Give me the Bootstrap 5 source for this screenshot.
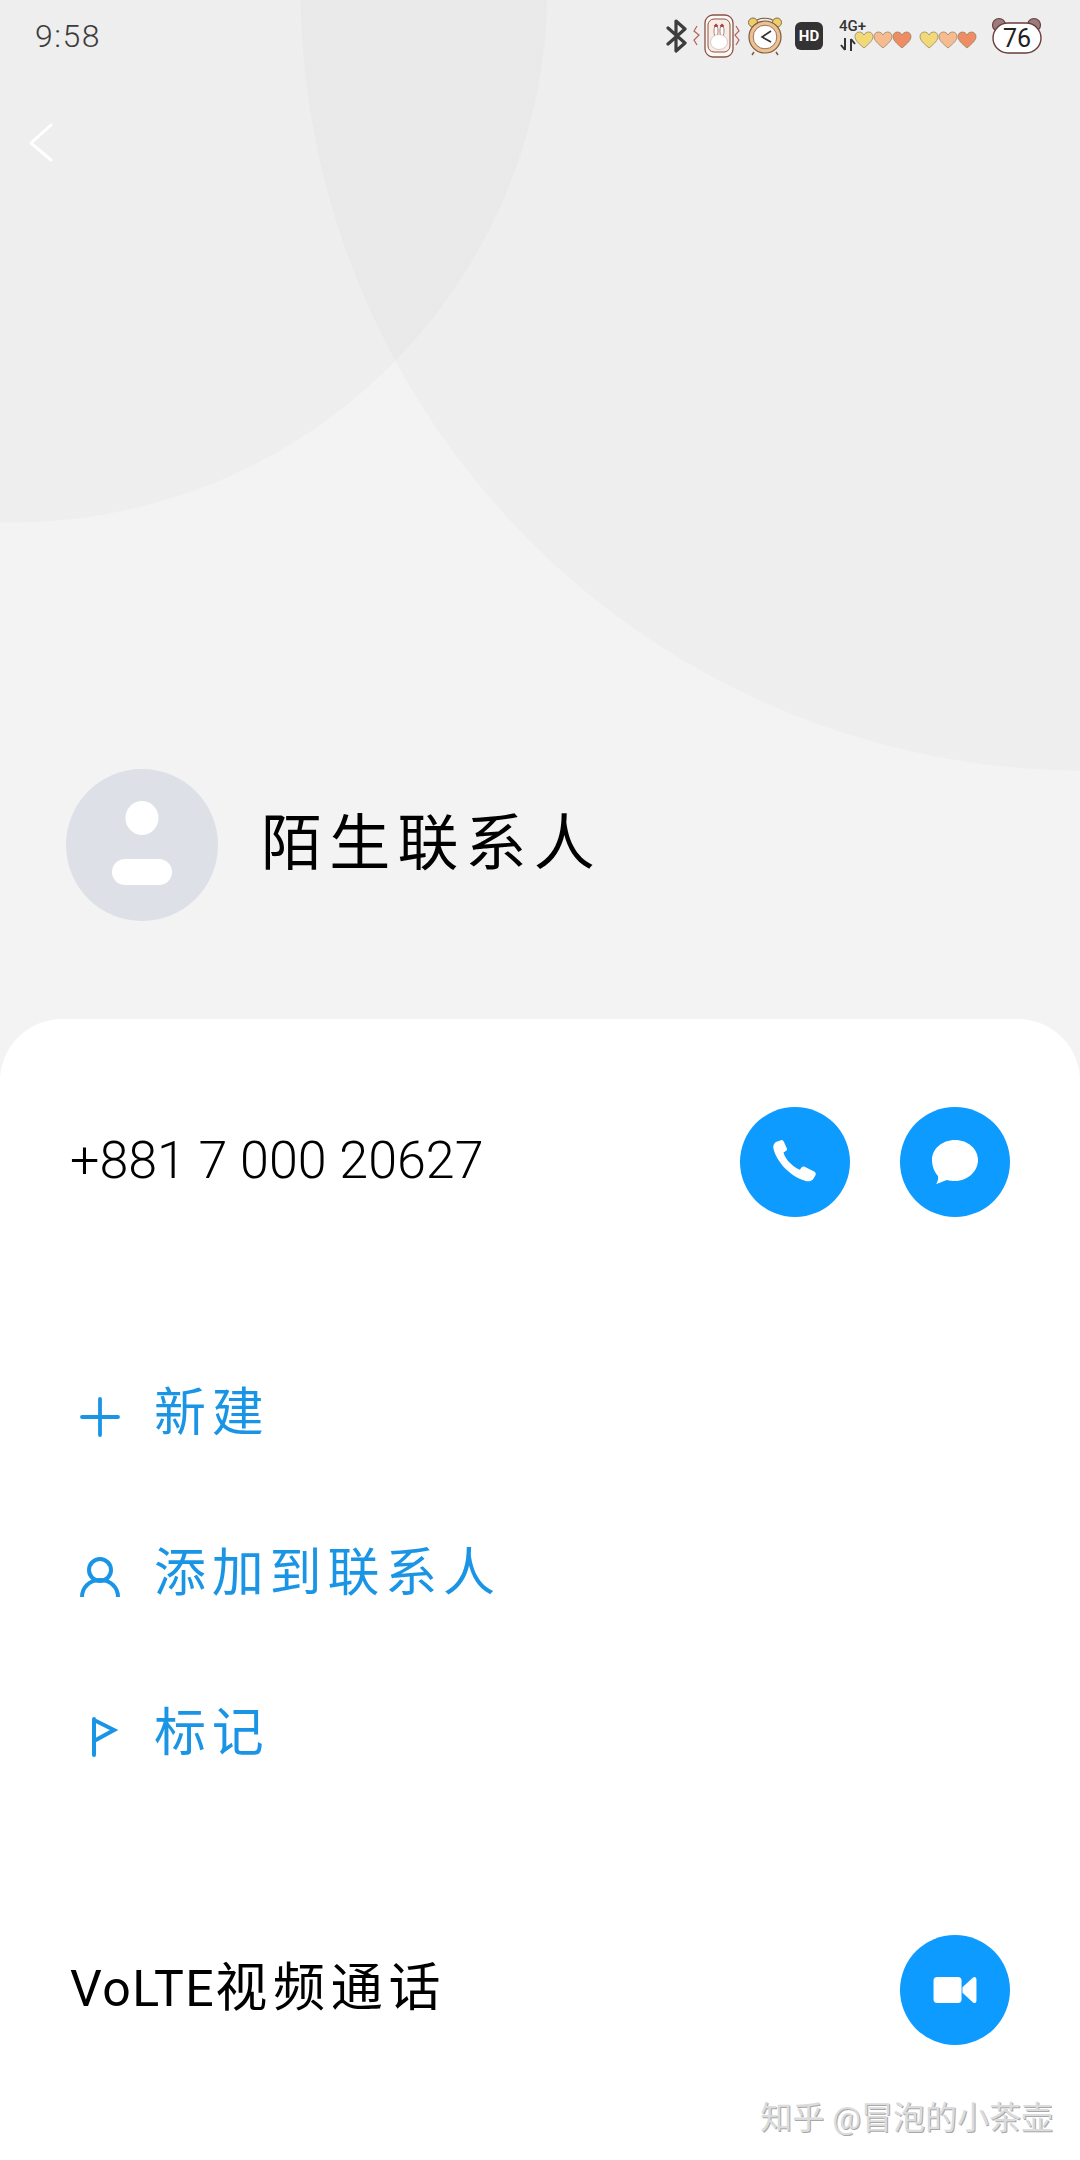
<!DOCTYPE html>
<html lang="zh-CN">
<head>
  <meta charset="UTF-8" />
  <meta name="viewport" content="width=device-width, initial-scale=1" />
  <title>陌生联系人</title>
  <link href="https://cdn.jsdelivr.net/npm/bootstrap@5.3.0/dist/css/bootstrap.min.css" rel="stylesheet">
  <style>
    body {
      width: 1080px;
      height: 2160px;
      overflow: hidden;
      background: #f3f3f3;
      font-family: Roboto, "Noto Sans CJK SC", sans-serif;
    }
    /* fundo com os dois circulos */
    .topo {
      height: 1019px;
      background-image:
        radial-gradient(circle 536px at 12px -13px, rgba(0,0,0,.02) 99.8%, transparent 100%),
        radial-gradient(circle 784px at 1084px -13px, rgba(0,0,0,.02) 99.9%, transparent 100%);
    }
    .barra-status { height: 72px; padding: 0 37px 0 35px; }
    .hora { font-size: 32px; font-weight: 300; color: #3c3c3c; letter-spacing: 1.5px; line-height: 1; margin-top: -1px; }
    .voltar { display: block; margin: 50px 0 0 29px; }
    .contato { padding: 0 0 98px 66px; }
    .avatar { width: 152px; height: 152px; background: #dde0e6; }
    .nome { font-size: 61px; line-height: 1; letter-spacing: 7.2px; color: #000; margin-left: 43px; margin-top: -2px; }
    .folha { height: 1141px; background: #fff; border-radius: 62px 62px 0 0; position: relative; }
    .linha-fone { padding: 88px 70px 0 70px; }
    .fone { font-size: 52px; font-weight: 300; color: #000; margin-top: -3px; }
    .btn-redondo {
      width: 110px; height: 110px; padding: 0;
      background: #0d9bff; border: 0;
      display: flex; align-items: center; justify-content: center;
    }
    .btn-redondo:hover { background: #0d9bff; }
    .gap-fone { gap: 50px; }
    .acoes { margin-top: 117px; }
    .acoes .list-group-item {
      height: 160px; padding: 0 0 0 80px;
      border: 0; background: transparent;
      color: #1a95e6; font-size: 52px; letter-spacing: 5.800px;
    }
    .acao-icone { width: 40px; margin-right: 34px; margin-top: 6px; flex: none; }
    .linha-video { padding: 121px 70px 0 70px; }
    .video-txt { font-size: 50px; color: #000; letter-spacing: 1.5px; margin-top: -3px; }
    .video-cjk { font-size: 52px; letter-spacing: 5.800px; }
    .ic-hd { width: 28px; height: 28px; background: #333; color: #fff; font: 700 15px Roboto, sans-serif; margin-left: 11px; }
    .ic-fone { margin-left: 2px; }
    .ic-relogio { margin-left: 4px; }
    .ic-bateria { margin-left: 14px; }
    .marca {
      position: absolute; right: 27px; bottom: 26px;
      font-size: 32px; line-height: 1; color: #dcdcdc;
      text-shadow: 1px 1px 0 #a8a8a8;
    }
  </style>
</head>
<body>

  <svg width="0" height="0" class="d-block">
    <symbol id="coracao" viewBox="0 0 20 18">
      <path d="M10 17C4 12 1 9 1 5.500C1 2.800 3 1 5.300 1C7.300 1 9 2 10 4C11 2 12.700 1 14.700 1C17 1 19 2.800 19 5.500C19 9 16 12 10 17Z" stroke="#8d7a5a" stroke-width=".7"/>
    </symbol>
  </svg>

  <div class="topo d-flex flex-column">
    <!-- barra de status -->
    <div class="barra-status d-flex justify-content-between align-items-center">
      <span class="hora">9:58</span>
      <div class="d-flex align-items-center">
        <svg width="22" height="36" viewBox="0 0 22 36" fill="none" stroke="#3d3d3d" stroke-width="3.200" stroke-linejoin="round" stroke-linecap="round"><path d="M2 10 19 25 10 33V3L19 11 2 26"/></svg>
        <svg class="ic-fone" width="52" height="46" viewBox="0 0 52 46" fill="none">
          <rect x="15" y="2" width="28" height="42" rx="8" fill="#fdf8f4" stroke="#8c5348" stroke-width="1.300"/>
          <rect x="18" y="6" width="22" height="33" rx="6" fill="#f8ece5" stroke="#8c5348" stroke-width="1"/>
          <ellipse cx="26" cy="18" rx="2" ry="6" fill="#fff" stroke="#8c5348" stroke-width=".7"/>
          <ellipse cx="32" cy="18" rx="2" ry="6" fill="#fff" stroke="#8c5348" stroke-width=".7"/>
          <path d="M24.500 13.500 26 12 27.500 13.500M30.500 13.500 32 12 33.500 13.500" stroke="#a3434e" stroke-width="2"/>
          <ellipse cx="29" cy="29" rx="8.500" ry="7.500" fill="#fff" stroke="#c9b5ad" stroke-width=".7"/>
          <path d="M7 13 4 18 9 22 4 27 7 32M46 13 49 18 45 22 49 27 46 32" stroke="#b5605e" stroke-width="1.200"/>
        </svg>
        <svg class="ic-relogio" width="38" height="40" viewBox="0 0 38 40" fill="none">
          <path d="M9 6C13 1 25 1 29 6" stroke="#7d5a3c" stroke-width="1.200"/>
          <circle cx="7" cy="6.500" r="4.500" fill="#e9cf6e" stroke="#8a6a3a"/>
          <circle cx="31" cy="6.500" r="4.500" fill="#e9cf6e" stroke="#8a6a3a"/>
          <circle cx="19" cy="21" r="16" fill="#eec193" stroke="#7d5a3c" stroke-width="1.200"/>
          <circle cx="19" cy="21" r="11.800" fill="#fff" stroke="#7d5a3c" stroke-width=".8"/>
          <path d="M25 15 16 21 25 26" stroke="#333" stroke-width="1.600"/>
          <path d="M8 36 6 39M30 36 32 39" stroke="#7d5a3c" stroke-width="1.500"/>
        </svg>
        <span class="ic-hd d-flex align-items-center justify-content-center rounded-2">HD</span>
        <svg class="ms-3" width="138" height="36" viewBox="0 0 138 36">
          <text x="0" y="13" font-family="Roboto, sans-serif" font-size="15" font-weight="500" fill="#333">4G+</text>
          <path d="M6 20V32M2 27 6 32M12 33V21M12 21 16 26" stroke="#333" stroke-width="2" fill="none"/>
          <use href="#coracao" x="15" y="13" width="20" height="18" fill="#f1d878"/>
          <use href="#coracao" x="34" y="13" width="20" height="18" fill="#f6bc90"/>
          <use href="#coracao" x="53" y="13" width="20" height="18" fill="#ee8c64"/>
          <use href="#coracao" x="80" y="13" width="20" height="18" fill="#f1d878"/>
          <use href="#coracao" x="99" y="13" width="20" height="18" fill="#f6bc90"/>
          <use href="#coracao" x="118" y="13" width="20" height="18" fill="#ee8c64"/>
        </svg>
        <svg class="ic-bateria" width="52" height="38" viewBox="0 0 52 38">
          <circle cx="8" cy="8" r="6.500" fill="#9b7b7c" stroke="#6a4040" stroke-width="1.200"/>
          <circle cx="43" cy="8" r="6.500" fill="#9b7b7c" stroke="#6a4040" stroke-width="1.200"/>
          <rect x="2" y="6" width="48" height="30" rx="15" fill="#fff" stroke="#6a3c3c" stroke-width="1.400"/>
          <text x="26" y="30" text-anchor="middle" font-family="Roboto, sans-serif" font-size="25" fill="#222">76</text>
        </svg>
      </div>
    </div>

    <svg class="voltar" width="24" height="40" viewBox="0 0 24 40" fill="none" stroke="#fff" stroke-width="3" stroke-linecap="round" stroke-linejoin="round"><path d="M22 3 2 21 22 38"/></svg>

    <!-- contato -->
    <div class="contato d-flex align-items-center mt-auto">
      <div class="avatar rounded-circle d-flex align-items-center justify-content-center flex-none">
        <svg width="62" height="88" viewBox="0 0 62 88" fill="#fff"><ellipse cx="31" cy="17" rx="16.500" ry="17"/><rect x="1" y="58" width="60" height="26" rx="13"/></svg>
      </div>
      <div class="nome">陌生联系人</div>
    </div>
  </div>

  <div class="folha">
    <!-- telefone -->
    <div class="linha-fone d-flex justify-content-between align-items-center">
      <span class="fone">+881 7 000 20627</span>
      <div class="d-flex gap-fone">
        <button class="btn btn-redondo rounded-circle" type="button" aria-label="Ligar">
          <svg width="46" height="46" viewBox="0 0 48 48" fill="#fff"><path d="M4 3 10 1C11 1 12 2 12.500 3L15.500 10C16 11 15.500 12 14.500 12.500L12 14C13 18 16 23 20 26C23 29 26 31 29 32L31 29.500C32 28.500 33 28.300 34 29L44 34C45.500 34.800 46 36 45.500 37.500L43.500 41C42 44 39 44.500 36 44C28 42 20 37 14 31C8 25 3 17 1.500 10C1 7 2 4.500 4 3Z"/></svg>
        </button>
        <button class="btn btn-redondo rounded-circle" type="button" aria-label="Mensagem">
          <svg width="46" height="44" viewBox="0 0 46 44" fill="#fff"><path d="M23 0C36 0 46 9 46 20C46 31 36 41 23 41C20 41 17.500 40.700 15 40C11 41.500 7 43 4 44C5.500 42 6.500 39.500 6 36C2.500 32 0 26.500 0 20C0 9 10 0 23 0Z"/></svg>
        </button>
      </div>
    </div>

    <!-- acoes -->
    <div class="acoes list-group list-group-flush">
      <a href="#" class="list-group-item d-flex align-items-center">
        <svg class="acao-icone" width="40" height="40" viewBox="0 0 40 40" fill="none" stroke="#1a95e6" stroke-width="3.800" stroke-linecap="round"><path d="M20 2V38M2 20H38"/></svg>
        <span>新建</span>
      </a>
      <a href="#" class="list-group-item d-flex align-items-center">
        <svg class="acao-icone" width="40" height="40" viewBox="0 0 40 40" fill="none" stroke="#1a95e6" stroke-width="4"><circle cx="20" cy="13" r="11"/><path d="M2 40C2 30 10 23 20 23C30 23 38 30 38 40"/></svg>
        <span>添加到联系人</span>
      </a>
      <a href="#" class="list-group-item d-flex align-items-center">
        <svg class="acao-icone" width="40" height="40" viewBox="0 0 40 40" fill="none" stroke="#1a95e6" stroke-width="4" stroke-linecap="round"><path d="M14 2V38M14 3 34 13 14 24"/></svg>
        <span>标记</span>
      </a>
    </div>

    <!-- video -->
    <div class="linha-video d-flex justify-content-between align-items-center">
      <span class="video-txt">VoLTE<span class="video-cjk">视频通话</span></span>
      <button class="btn btn-redondo rounded-circle" type="button" aria-label="Video">
        <svg width="44" height="28" viewBox="0 0 46 30" fill="#fff"><rect x="0" y="1" width="30" height="28" rx="4"/><path d="M31 12 42 2C44 0 46 1 46 4V26C46 29 44 30 42 28L31 18Z"/></svg>
      </button>
    </div>

    <span class="marca">知乎 @冒泡的小茶壶</span>
  </div>

  <script src="https://cdn.jsdelivr.net/npm/bootstrap@5.3.0/dist/js/bootstrap.bundle.min.js"></script>
</body>
</html>
